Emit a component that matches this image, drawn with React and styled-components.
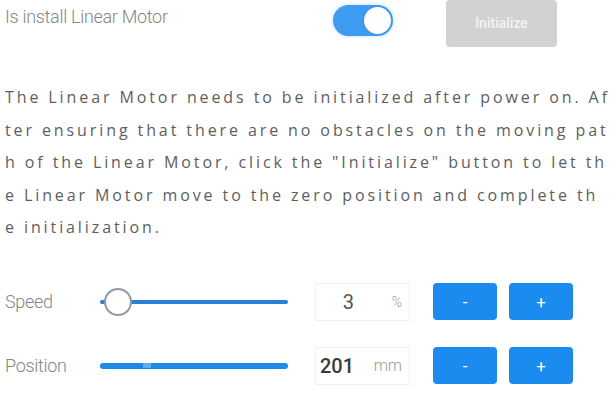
import React from "react";
import styled, { createGlobalStyle } from "styled-components";

const Global = createGlobalStyle`
  html, body { margin: 0; padding: 0; background: #ffffff; }
  body { width: 616px; height: 393px; overflow: hidden; }
`;

const Page = styled.div`
  padding: 0 0 0 5px;
  display: flex;
  flex-direction: column;
  font-family: Roboto, "Liberation Sans", sans-serif;
`;

const HeaderRow = styled.div`
  display: flex;
  align-items: center;
  height: 48px;
`;

const Label = styled.div`
  width: ${(p) => p.$w}px;
  font-family: Roboto, "Liberation Sans", sans-serif;
  font-weight: 300;
  font-size: ${(p) => p.$fs || 18}px;
  letter-spacing: -0.3px;
  color: #858585;
  margin-top: ${(p) => p.$mt || 0}px;
`;

const Toggle = styled.div`
  width: 60px;
  height: 31px;
  border-radius: 16px;
  background: #3d9cf2;
  display: flex;
  align-items: center;
  justify-content: flex-end;
  padding: 0 2px;
  box-sizing: border-box;
  margin-top: -7px;
  box-shadow: 0 0 4px rgba(61, 156, 242, 0.35);
`;

const Knob = styled.div`
  width: 27px;
  height: 27px;
  border-radius: 50%;
  background: #ffffff;
  box-shadow: 0 0 2px rgba(0, 0, 0, 0.15);
`;

const InitButton = styled.button`
  margin-left: 53px;
  margin-top: -2px;
  width: 111px;
  height: 47px;
  border: none;
  border-radius: 4px;
  background: #d2d2d2;
  color: #f2f2f2;
  font-family: Roboto, "Liberation Sans", sans-serif;
  font-size: 14px;
  font-weight: 500;
  padding: 0;
`;

const Paragraph = styled.div`
  margin-top: 33px;
  font-family: "Open Sans", "Liberation Sans", sans-serif;
  font-size: 16px;
  letter-spacing: 2.9px;
  line-height: 32.5px;
  color: #5e5e5e;
  white-space: nowrap;
`;

const Line = styled.div``;

const ControlRow = styled.div`
  display: flex;
  align-items: center;
  height: 38px;
  margin-top: ${(p) => p.$mt}px;
`;

const SliderBox = styled.div`
  position: relative;
  width: 188px;
  height: 28px;
  display: flex;
  align-items: center;
`;

const Track = styled.div`
  width: 100%;
  height: ${(p) => p.$h}px;
  border-radius: 3px;
  background: ${(p) => p.$c};
`;

const Thumb = styled.div`
  position: absolute;
  top: 0;
  width: 28px;
  height: 28px;
  box-sizing: border-box;
  border-radius: 50%;
  background: #ffffff;
  border: 2px solid #8d9aa6;
`;

const Marker = styled.div`
  position: absolute;
  top: 11px;
  width: 8px;
  height: 5px;
  background: #5aaef5;
`;

const ValueBox = styled.div`
  margin-left: 27px;
  width: 95px;
  height: 38px;
  box-sizing: border-box;
  border: 1px solid #f1f1f1;
  display: flex;
  align-items: center;
  font-family: Roboto, "Liberation Sans", sans-serif;
`;

const Num = styled.span`
  width: 38px;
  text-align: right;
  font-size: 20px;
  color: ${(p) => (p.$dark ? "#3a3a3a" : "#555555")};
  font-weight: ${(p) => (p.$dark ? 500 : 400)};
`;

const Unit = styled.span`
  flex: 1;
  text-align: right;
  padding-right: 7px;
  font-size: ${(p) => p.$fs}px;
  font-weight: 300;
  color: #9a9a9a;
`;

const StepButton = styled.button`
  width: 64px;
  height: 37px;
  margin-left: ${(p) => p.$ml}px;
  border: none;
  border-radius: 4px;
  background: #1b8bf0;
  color: #ffffff;
  font-family: Roboto, "Liberation Sans", sans-serif;
  font-size: 17px;
  padding: 0;
`;

const lines = [
  "The Linear Motor needs to be initialized after power on. Af",
  "ter ensuring that there are no obstacles on the moving pat",
  "h of the Linear Motor, click the \"Initialize\" button to let th",
  "e Linear Motor move to the zero position and complete th",
  "e initialization.",
];

export default function App() {
  return (
    <>
      <Global />
      <Page>
        <HeaderRow>
          <Label $w={328} $mt={-16} $fs={18}>Is install Linear Motor</Label>
          <Toggle>
            <Knob />
          </Toggle>
          <InitButton>Initialize</InitButton>
        </HeaderRow>
        <Paragraph>
          {lines.map((l, i) => (
            <Line key={i}>{l}</Line>
          ))}
        </Paragraph>
        <ControlRow $mt={39}>
          <Label $w={95}>Speed</Label>
          <SliderBox>
            <Track $h={4} $c="#2a80d6" />
            <Thumb style={{ left: "4px" }} />
          </SliderBox>
          <ValueBox>
            <Num>3</Num>
            <Unit $fs={14}>%</Unit>
          </ValueBox>
          <StepButton $ml={23}>-</StepButton>
          <StepButton $ml={12}>+</StepButton>
        </ControlRow>
        <ControlRow $mt={26}>
          <Label $w={95}>Position</Label>
          <SliderBox>
            <Track $h={6} $c="#1c8ae8" />
            <Marker style={{ left: "43px" }} />
          </SliderBox>
          <ValueBox>
            <Num $dark>201</Num>
            <Unit $fs={16}>mm</Unit>
          </ValueBox>
          <StepButton $ml={23}>-</StepButton>
          <StepButton $ml={12}>+</StepButton>
        </ControlRow>
      </Page>
    </>
  );
}
